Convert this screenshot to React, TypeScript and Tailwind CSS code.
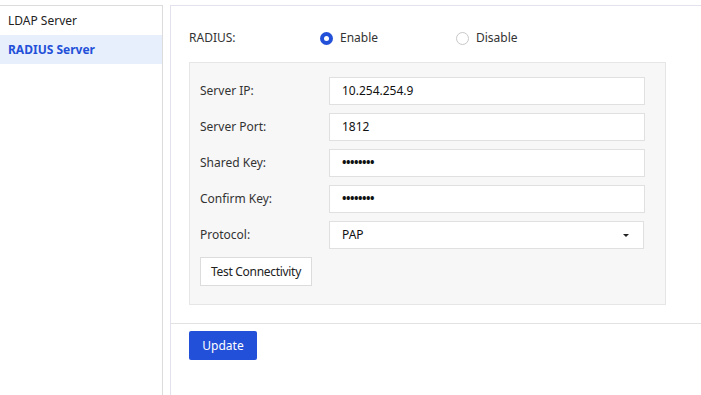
const FIELDS = [
  { label: 'Server IP:', value: '10.254.254.9', secret: false },
  { label: 'Server Port:', value: '1812', secret: false },
  { label: 'Shared Key:', value: '••••••••', secret: true },
  { label: 'Confirm Key:', value: '••••••••', secret: true },
];

function Radio({ checked, label }: { checked: boolean; label: string }) {
  return (
    <label className="flex items-center gap-[7px]">
      {checked ? (
        <span className="flex h-[13px] w-[13px] items-center justify-center rounded-full bg-[#2350d8]">
          <span className="h-[5px] w-[5px] rounded-full bg-white" />
        </span>
      ) : (
        <span className="h-[13px] w-[13px] rounded-full border border-[#c8c8c8] bg-white" />
      )}
      <span className="text-[12px] text-[#333]">{label}</span>
    </label>
  );
}

export default function App() {
  return (
    <div className="flex h-[395px] w-[701px] gap-[7px] overflow-hidden bg-white pt-[5px] font-['Noto_Sans',sans-serif] text-[12px] text-[#333]">
      <div className="w-[163px] shrink-0 border-r border-t border-[#dcdcdc]">
        <div className="flex h-[29px] items-center px-[8px] text-[#222]">LDAP Server</div>
        <div className="flex h-[29px] items-center bg-[#e7eefc] px-[8px] font-bold text-[#2350d8]">
          RADIUS Server
        </div>
      </div>
      <div className="flex-1 border-l border-t border-[#e2e2ee]">
        <div className="px-[18px]">
          <div className="flex h-[56px] items-start pt-[23px]">
            <span className="w-[131px]">RADIUS:</span>
            <div className="w-[136px]">
              <Radio checked label="Enable" />
            </div>
            <Radio checked={false} label="Disable" />
          </div>
          <div className="w-[477px] border border-[#e6e6e6] bg-[#f7f7f7] px-[10px] pb-[18px] pt-[14px]">
            <div className="flex flex-col gap-[8px]">
              {FIELDS.map((f) => (
                <div key={f.label} className="flex items-center">
                  <span className="w-[129px]">{f.label}</span>
                  <div className="flex h-[28px] w-[316px] items-center border border-[#e0e0e0] bg-white px-[12px] text-[#111]">
                    <span className={f.secret ? 'font-bold tracking-[-0.5px]' : ''}>{f.value}</span>
                  </div>
                </div>
              ))}
              <div className="flex items-center">
                <span className="w-[129px]">Protocol:</span>
                <div className="flex h-[28px] w-[315px] items-center justify-between border border-[#e0e0e0] bg-white px-[12px] text-[#111]">
                  <span>PAP</span>
                  <svg width="6" height="3" viewBox="0 0 6 3" className="mr-[2px]">
                    <path d="M0 0h6L3 3z" fill="#222" />
                  </svg>
                </div>
              </div>
            </div>
            <button className="mt-[8px] h-[29px] w-[112px] border border-[#dcdcdc] bg-white text-[12px] tracking-[-0.3px] text-[#222]">
              Test Connectivity
            </button>
          </div>
        </div>
        <div className="mt-[18px] border-t border-[#e2e2e2] px-[18px] pt-[7px]">
          <button className="h-[29px] w-[68px] rounded-[2px] bg-[#2350d8] text-[12px] text-white">
            Update
          </button>
        </div>
      </div>
    </div>
  );
}
